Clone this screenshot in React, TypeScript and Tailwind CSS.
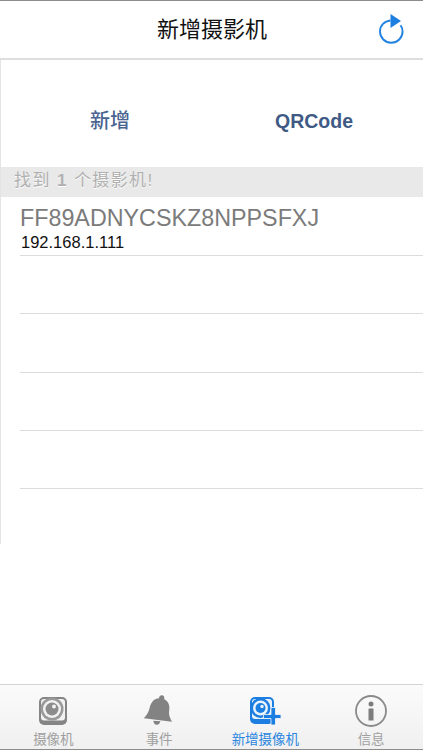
import React from 'react';

const cjk = "font-['Liberation_Sans','Noto_Sans_CJK_SC',sans-serif]";

const CameraIcon = () => (
    <svg width="30" height="30" viewBox="0 0 30 30">
        <rect x="1" y="1" width="28" height="28" rx="5" fill="#858585" />
        <rect x="3" y="3" width="24" height="21.500" rx="3" fill="#f2f2f2" />
        <circle cx="14" cy="13" r="11.500" fill="#9a9a9a" />
        <circle cx="14" cy="13" r="9" fill="#f2f2f2" />
        <circle cx="14" cy="13" r="6.500" fill="#8c8c8c" />
        <circle cx="16" cy="10.500" r="2" fill="#f2f2f2" />
    </svg>
);

const BellIcon = () => (
    <svg width="30" height="34" viewBox="0 0 30 34">
        <g transform="rotate(9 15 17)">
            <path d="M15.500 1c2 0 3 1.500 2.700 3.300C23 6 25 10 25 15c0 4 1.500 7 4.500 10.500L1 26.500c3-4 4-7 4.300-11.500C5.700 9 8.500 5.300 13 4.300 12.800 2.500 14 1 15.500 1z" fill="#838383" />
            <path d="M11 27.500c.5 2.500 2 3.500 3.700 3.500s3-1.200 3.300-4z" fill="#838383" />
        </g>
    </svg>
);

const AddCameraIcon = () => (
    <svg width="32" height="30" viewBox="0 0 32 30">
        <rect x="1" y="1" width="24" height="27" rx="5" fill="#1c7ee0" />
        <rect x="3" y="3" width="20" height="20" rx="3" fill="#eaf3fc" />
        <circle cx="11.500" cy="12" r="10" fill="#1c7ee0" />
        <circle cx="11.500" cy="12" r="7.500" fill="#eaf3fc" />
        <circle cx="11.500" cy="12" r="5" fill="#1c7ee0" />
        <circle cx="13" cy="10.500" r="1.700" fill="#eaf3fc" />
        <path d="M22 11.500h4.500v7H32v4h-5.500v6.500H22v-6.500h-7.500v-4H22z" fill="#1c7ee0" stroke="#f7f7f7" strokeWidth="0.800" />
    </svg>
);

const InfoIcon = () => (
    <svg width="34" height="34" viewBox="0 0 34 34">
        <circle cx="17" cy="17" r="15" fill="none" stroke="#8a8a8a" strokeWidth="1.800" />
        <circle cx="17" cy="10" r="2.500" fill="#7d7d7d" />
        <rect x="14.500" y="14.500" width="5" height="12" rx="0.500" fill="#7d7d7d" />
    </svg>
);

const tabs = [
    { label: '摄像机', icon: <CameraIcon />, active: false, shift: 'ml-[1px]' },
    { label: '事件', icon: <BellIcon />, active: false, shift: 'ml-[1px]' },
    { label: '新增摄像机', icon: <AddCameraIcon />, active: true, shift: 'ml-[2px]' },
    { label: '信息', icon: <InfoIcon />, active: false, shift: 'ml-[2px]' },
];

export default function App() {
    return (
        <div className={`relative flex h-[750px] w-[423px] flex-col overflow-hidden bg-white ${cjk}`}>
            {/* Nav bar */}
            <header className="flex h-[60px] shrink-0 items-center justify-center border-t border-b-2 border-t-[#8c8c8c] border-b-[#dedede] bg-white">
                <h1 className="ml-[1px] text-[22px] leading-none text-[#111]">新增摄影机</h1>
                <button className="absolute left-[376px] top-[12px]">
                    <svg width="30" height="32" viewBox="0 0 30 32">
                        <path d="M14.500 8.500C8.500 9 4 13.500 4 19.500a11.300 11.300 0 0 0 22.600 0c0-2.500-.8-4.500-2-6.300" fill="none" stroke="#2283e0" strokeWidth="1.900" />
                        <path d="M14.500 2 L25 9 L14.500 16z" fill="#1c7ee0" />
                    </svg>
                </button>
            </header>

            <div className="flex h-[484px] flex-col border-l border-l-[#e4e4e4]">
                {/* Actions */}
                <div className="flex h-[107px] shrink-0 items-center pt-[15px]">
                    <button className="ml-[89px] text-[20px] leading-none font-medium text-[#4a6390]">新增</button>
                    <button className="mt-[1px] ml-[145px] text-[19.500px] leading-none font-bold text-[#3f5a85]">QRCode</button>
                </div>

                {/* Found header */}
                <div className="flex h-[30px] shrink-0 items-center bg-[#e9e9e9] pb-[3px] pl-[13px] text-[17px] leading-none tracking-[1.400px] text-[#b0b0b0] [text-shadow:0_1px_0_#fff]">
                    找到&nbsp;<span className="font-bold">1</span>&nbsp;个摄影机!
                </div>

                {/* Camera list */}
                <div className="ml-[19px]">
                    <div className="h-[59px] border-b border-b-[#dcdcdc] pt-[8px]">
                        <div className="text-[23.300px] leading-[26px] text-[#7b7b7b]">FF89ADNYCSKZ8NPPSFXJ</div>
                        <div className="mt-[2px] ml-[1px] text-[16.500px] leading-[18px] text-[#111]">192.168.1.111</div>
                    </div>
                    <div className="h-[58px] border-b border-b-[#dcdcdc]" />
                    <div className="h-[59px] border-b border-b-[#dcdcdc]" />
                    <div className="h-[58px] border-b border-b-[#dcdcdc]" />
                    <div className="h-[58px] border-b border-b-[#dcdcdc]" />
                </div>
            </div>

            <div className="flex-1" />

            {/* Tab bar */}
            <nav className="grid h-[66px] shrink-0 grid-cols-4 border-t border-b border-t-[#d4d4d4] border-b-[#8c8c8c] bg-gradient-to-b from-[#fbfbfb] to-[#f0f0f0]">
                {tabs.map((tab) => (
                    <div key={tab.label} className={`flex flex-col items-center pt-[8px] ${tab.shift}`}>
                        <div className="flex h-[36px] items-center justify-center">{tab.icon}</div>
                        <span className={`mt-[2px] text-[13.500px] leading-[18px] ${tab.active ? 'text-[#2a86de]' : 'text-[#a0a0a0]'}`}>
                            {tab.label}
                        </span>
                    </div>
                ))}
            </nav>
        </div>
    );
}
